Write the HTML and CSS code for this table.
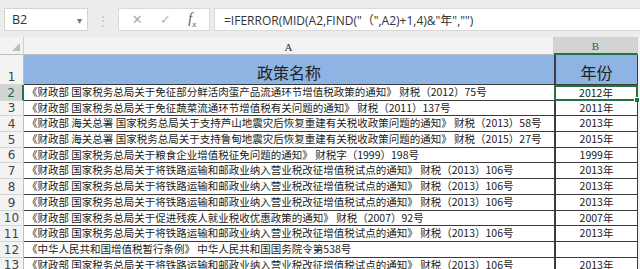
FILE: index.html
```html
<!DOCTYPE html>
<html lang="zh">
<head>
<meta charset="utf-8">
<link rel="stylesheet" href="styles.css">
</head>
<body>
<div class="app">
  <div class="fbar">
    <div class="namebox"><span class="nb-text">B2</span><span class="nb-arrow">▾</span></div>
    <div class="sep">⋮</div>
    <div class="btns">
      <span class="btn x">✕</span>
      <span class="btn ok">✓</span>
      <span class="btn fx"><i>f</i><sub>x</sub></span>
    </div>
    <div class="formula">=IFERROR(MID(A2,FIND("（",A2)+1,4)&amp;"年","")</div>
  </div>
  <div class="sheet">
    <div class="corner"><span class="tri"></span></div>
    <div class="colh">A</div>
    <div class="colh sel">B</div>
    <div class="fill"></div>

    <div class="rowh tall">1</div>
    <div class="title">政策名称</div>
    <div class="title b">年份</div>
    <div class="fill"></div>

    <div class="rowh sel">2</div>
    <div class="cell">《财政部 国家税务总局关于免征部分鲜活肉蛋产品流通环节增值税政策的通知》 财税（2012）75号</div>
    <div class="cell y active">2012年<span class="handle"></span></div>
    <div class="fill"></div>

    <div class="rowh">3</div>
    <div class="cell">《财政部 国家税务总局关于免征蔬菜流通环节增值税有关问题的通知》 财税（2011）137号</div>
    <div class="cell y">2011年</div>
    <div class="fill"></div>

    <div class="rowh">4</div>
    <div class="cell">《财政部 海关总署 国家税务总局关于支持芦山地震灾后恢复重建有关税收政策问题的通知》 财税（2013）58号</div>
    <div class="cell y">2013年</div>
    <div class="fill"></div>

    <div class="rowh">5</div>
    <div class="cell">《财政部 海关总署 国家税务总局关于支持鲁甸地震灾后恢复重建有关税收政策问题的通知》 财税（2015）27号</div>
    <div class="cell y">2015年</div>
    <div class="fill"></div>

    <div class="rowh">6</div>
    <div class="cell">《财政部 国家税务总局关于粮食企业增值税征免问题的通知》 财税字（1999）198号</div>
    <div class="cell y">1999年</div>
    <div class="fill"></div>

    <div class="rowh">7</div>
    <div class="cell">《财政部 国家税务总局关于将铁路运输和邮政业纳入营业税改征增值税试点的通知》 财税（2013）106号</div>
    <div class="cell y">2013年</div>
    <div class="fill"></div>

    <div class="rowh">8</div>
    <div class="cell">《财政部 国家税务总局关于将铁路运输和邮政业纳入营业税改征增值税试点的通知》 财税（2013）106号</div>
    <div class="cell y">2013年</div>
    <div class="fill"></div>

    <div class="rowh">9</div>
    <div class="cell">《财政部 国家税务总局关于将铁路运输和邮政业纳入营业税改征增值税试点的通知》 财税（2013）106号</div>
    <div class="cell y">2013年</div>
    <div class="fill"></div>

    <div class="rowh">10</div>
    <div class="cell">《财政部 国家税务总局关于促进残疾人就业税收优惠政策的通知》 财税（2007）92号</div>
    <div class="cell y">2007年</div>
    <div class="fill"></div>

    <div class="rowh">11</div>
    <div class="cell">《财政部 国家税务总局关于将铁路运输和邮政业纳入营业税改征增值税试点的通知》 财税（2013）106号</div>
    <div class="cell y">2013年</div>
    <div class="fill"></div>

    <div class="rowh">12</div>
    <div class="cell">《中华人民共和国增值税暂行条例》 中华人民共和国国务院令第538号</div>
    <div class="cell y"></div>
    <div class="fill"></div>

    <div class="rowh">13</div>
    <div class="cell">《财政部 国家税务总局关于将铁路运输和邮政业纳入营业税改征增值税试点的通知》 财税（2013）106号</div>
    <div class="cell y">2013年</div>
    <div class="fill"></div>
  </div>
</div>
</body>
</html>
```
FILE: styles.css
```css
* { box-sizing: border-box; }
html, body { margin: 0; padding: 0; }
body {
  width: 640px;
  height: 269px;
  overflow: hidden;
  background: #ececec;
  font-family: "Noto Sans CJK SC", "Noto Sans", sans-serif;
}
.app { display: flex; flex-direction: column; }

.fbar {
  display: flex;
  align-items: stretch;
  height: 37px;
  padding: 8px 0 6px 4px;
  background: #ececec;
}
.namebox {
  width: 84px;
  background: #fff;
  border: 1px solid #d4d4d4;
  display: flex;
  align-items: center;
  justify-content: space-between;
  padding: 0 5px 0 7px;
  font-family: "Open Sans", "Liberation Sans", sans-serif;
  font-size: 12.5px;
  color: #333;
}
.nb-arrow { font-size: 10px; color: #777; }
.sep {
  width: 30px;
  display: flex;
  align-items: center;
  justify-content: center;
  color: #c4c4c4;
  font-size: 12px;
}
.btns {
  width: 92px;
  background: #fff;
  border: 1px solid #d9d9d9;
  display: flex;
  align-items: center;
  justify-content: space-around;
  padding: 0 4px;
}
.btn { color: #a8a8a8; font-size: 13px; font-family: "DejaVu Sans", sans-serif; }
.btn.ok { color: #b5b5b5; }
.btn.fx { color: #555; font-family: "Liberation Serif", serif; font-size: 14px; }
.btn.fx sub { font-size: 9px; font-style: italic; }
.formula {
  flex: 1;
  margin-left: 4px;
  background: #fff;
  border: 1px solid #d9d9d9;
  border-right: none;
  display: flex;
  align-items: center;
  padding-left: 9px;
  font-family: "Open Sans", "Noto Sans CJK SC", sans-serif;
  font-size: 12px;
  color: #333;
}

.sheet {
  display: grid;
  grid-template-columns: 24px 530px 84px 2px;
  grid-template-rows: 18px 30px repeat(12, 15.7px);
  background: #fff;
}
.corner {
  background: #f3f3f3;
  border-right: 1px solid #d0d0d0;
  border-bottom: 1px solid #bdbdbd;
  position: relative;
}
.tri {
  position: absolute;
  right: 3px;
  bottom: 3px;
  width: 0; height: 0;
  border-left: 8px solid transparent;
  border-bottom: 8px solid #bdbdbd;
}
.colh {
  background: #f3f3f3;
  border-right: 1px solid #d0d0d0;
  border-bottom: 1px solid #bdbdbd;
  display: flex;
  align-items: center;
  justify-content: center;
  font-family: "Liberation Serif", serif;
  font-size: 11px;
  color: #333;
  padding-top: 2px;
}
.colh.sel {
  background: #d3d3d3;
  border-bottom: 2px solid #217346;
  color: #1d6b41;
}
.fill { background: #f3f3f3; }
.rowh {
  background: #f3f3f3;
  border-right: 1px solid #bdbdbd;
  border-bottom: 1px solid #d6d6d6;
  display: flex;
  align-items: flex-end;
  justify-content: center;
  font-family: "DejaVu Sans", sans-serif;
  font-size: 12px;
  line-height: 14px;
  color: #444;
}
.rowh.sel {
  background: #d3d3d3;
  color: #217346;
  border-right: 2px solid #217346;
}
.title {
  background: #8db4e2;
  border-bottom: 1px solid #3a3a3a;
  display: flex;
  align-items: center;
  justify-content: center;
  font-size: 16px;
  color: #222;
  padding-top: 5px;
}
.title.b { border-left: 2px solid #3d3d3d; border-right: 1px solid #3d3d3d; }
.cell {
  border-bottom: 1px solid #3a3a3a;
  font-size: 10.5px;
  line-height: 14px;
  color: #1a1a1a;
  padding-left: 3px;
  white-space: nowrap;
  overflow: hidden;
}
.cell.y {
  border-left: 2px solid #3d3d3d;
  border-right: 1px solid #3d3d3d;
  text-align: center;
  padding-left: 0;
  overflow: visible;
  position: relative;
}
.cell.active {
  border: 2px solid #217346;
  line-height: 12px;
}
.handle {
  position: absolute;
  right: -4px;
  bottom: -4px;
  width: 6px;
  height: 6px;
  background: #217346;
  border: 1px solid #fff;
}
```
